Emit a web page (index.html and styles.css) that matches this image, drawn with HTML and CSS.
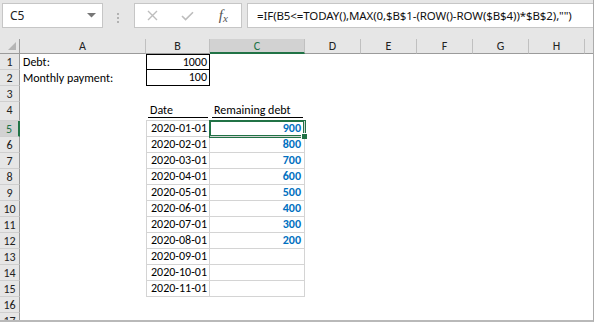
FILE: index.html
```html
<!DOCTYPE html>
<html lang="en">
	<head>
		<meta charset="utf-8" />
		<title>Remaining debt</title>
		<link rel="stylesheet" href="styles.css">
	</head>

	<body>
		<div class="window">
			<div class="toolbar">
				<div class="namebox">
					<span class="ref">C5</span>
					<svg class="caret" width="9" height="5" viewBox="0 0 9 5"><polygon points="0,0 9,0 4.5,4.5" fill="#777" /></svg>
				</div>
				<div class="grip"><i></i><i></i><i></i></div>
				<div class="fnbox">
					<span class="slot">
						<svg width="11" height="11" viewBox="0 0 11 11"><path d="M1 1 L10 10 M10 1 L1 10" stroke="#bdbdbd" stroke-width="1.4" fill="none" /></svg>
					</span>
					<span class="slot">
						<svg width="13" height="10" viewBox="0 0 13 10"><path d="M1 5 L4.6 8.6 L12 1.2" stroke="#bdbdbd" stroke-width="1.6" fill="none" /></svg>
					</span>
					<span class="slot fx">f<small>x</small></span>
				</div>
				<div class="formula">=IF(B5&lt;=TODAY(),MAX(0,$B$1-(ROW()-ROW($B$4))*$B$2),"")</div>
			</div>

			<div class="sheet">
				<div class="row head">
					<div class="rh corner">
						<svg width="8" height="8" viewBox="0 0 8 8"><polygon points="8,0 8,8 0,8" fill="#b5b5b5" /></svg>
					</div>
					<div class="ch col-a">A</div>
					<div class="ch col-b">B</div>
					<div class="ch col-c active">C</div>
					<div class="ch col-n">D</div>
					<div class="ch col-n">E</div>
					<div class="ch col-n">F</div>
					<div class="ch col-n">G</div>
					<div class="ch col-n">H</div>
					<div class="ch col-rest"></div>
				</div>

				<div class="row">
					<div class="rh">1</div>
					<div class="cell col-a">Debt:</div>
					<div class="cell col-b num boxed first">1000</div>
				</div>
				<div class="row">
					<div class="rh">2</div>
					<div class="cell col-a">Monthly payment:</div>
					<div class="cell col-b num boxed">100</div>
				</div>
				<div class="row">
					<div class="rh">3</div>
				</div>
				<div class="row tall">
					<div class="rh">4</div>
					<div class="cell col-a"></div>
					<div class="cell col-b heading"><span>Date</span></div>
					<div class="cell col-c heading"><span>Remaining debt</span></div>
				</div>

				<div class="row">
					<div class="rh active">5</div>
					<div class="cell col-a"></div>
					<div class="cell col-b date">2020-01-01</div>
					<div class="cell col-c amount selected">900</div>
				</div>
				<div class="row">
					<div class="rh">6</div>
					<div class="cell col-a"></div>
					<div class="cell col-b date">2020-02-01</div>
					<div class="cell col-c amount">800</div>
				</div>
				<div class="row">
					<div class="rh">7</div>
					<div class="cell col-a"></div>
					<div class="cell col-b date">2020-03-01</div>
					<div class="cell col-c amount">700</div>
				</div>
				<div class="row">
					<div class="rh">8</div>
					<div class="cell col-a"></div>
					<div class="cell col-b date">2020-04-01</div>
					<div class="cell col-c amount">600</div>
				</div>
				<div class="row">
					<div class="rh">9</div>
					<div class="cell col-a"></div>
					<div class="cell col-b date">2020-05-01</div>
					<div class="cell col-c amount">500</div>
				</div>
				<div class="row">
					<div class="rh">10</div>
					<div class="cell col-a"></div>
					<div class="cell col-b date">2020-06-01</div>
					<div class="cell col-c amount">400</div>
				</div>
				<div class="row">
					<div class="rh">11</div>
					<div class="cell col-a"></div>
					<div class="cell col-b date">2020-07-01</div>
					<div class="cell col-c amount">300</div>
				</div>
				<div class="row">
					<div class="rh">12</div>
					<div class="cell col-a"></div>
					<div class="cell col-b date">2020-08-01</div>
					<div class="cell col-c amount">200</div>
				</div>
				<div class="row">
					<div class="rh">13</div>
					<div class="cell col-a"></div>
					<div class="cell col-b date">2020-09-01</div>
					<div class="cell col-c amount"></div>
				</div>
				<div class="row">
					<div class="rh">14</div>
					<div class="cell col-a"></div>
					<div class="cell col-b date">2020-10-01</div>
					<div class="cell col-c amount"></div>
				</div>
				<div class="row">
					<div class="rh">15</div>
					<div class="cell col-a"></div>
					<div class="cell col-b date">2020-11-01</div>
					<div class="cell col-c amount"></div>
				</div>
				<div class="row">
					<div class="rh">16</div>
				</div>
				<div class="row">
					<div class="rh">17</div>
				</div>
			</div>
		</div>
	</body>
</html>
```

FILE: styles.css
```css
body {
	margin: 0;
	font-family: Calibri, Carlito, 'Liberation Sans', Arial, sans-serif;
	color: #000;
}

.window {
	box-sizing: border-box;
	width: 594px;
	height: 322px;
	overflow: hidden;
	background: #fff;
	border-right: 1px solid #ababab;
	border-bottom: 2px solid #b9b9b9;
}

/* formula bar */

.toolbar {
	display: flex;
	align-items: flex-start;
	height: 39px;
	padding: 3px 0 0 2px;
	box-sizing: border-box;
	background: #e6e6e6;
}

.namebox,
.fnbox,
.formula {
	box-sizing: border-box;
	height: 25px;
	background: #fff;
	border: 1px solid #c6c6c6;
}

.namebox {
	display: flex;
	align-items: center;
	justify-content: space-between;
	width: 101px;
	padding: 0 6px 0 7px;
	font-family: 'Noto Sans', 'Liberation Sans', sans-serif;
	font-size: 12px;
	color: #222;
}

.grip {
	display: flex;
	flex-direction: column;
	gap: 2px;
	width: 2px;
	margin: 10px 15px 0 14px;
}

.grip i {
	display: block;
	width: 2px;
	height: 2px;
	background: #b2b2b2;
}

.fnbox {
	display: flex;
	width: 108px;
	margin-right: 5px;
}

.slot {
	display: flex;
	align-items: center;
	justify-content: center;
	width: 36px;
	height: 23px;
}

.fx {
	font-family: 'Liberation Serif', 'Times New Roman', serif;
	font-style: italic;
	font-size: 15px;
	color: #555;
	padding-bottom: 2px;
}

.fx small {
	font-size: 11px;
	margin-top: 4px;
}

.formula {
	flex: 1;
	padding: 0 0 0 9px;
	line-height: 23px;
	font-family: 'Noto Sans', 'Liberation Sans', sans-serif;
	font-size: 11.5px;
	letter-spacing: -0.1px;
	color: #111;
	white-space: nowrap;
	border-right: none;
}

/* grid */

.sheet {
	font-size: 12px;
}

.row {
	display: flex;
	height: 16px;
}

.row.tall {
	height: 19px;
}

.row.head {
	height: 15px;
	background: #e6e6e6;
}

.rh {
	box-sizing: border-box;
	flex: none;
	width: 20px;
	height: 100%;
	background: #e6e6e6;
	border-right: 1px solid #9b9b9b;
	border-bottom: 1px solid #cfcfcf;
	text-align: center;
	line-height: 16px;
	color: #222;
}

.rh.active {
	background: #d2d2d2;
	border-right: 2px solid #217346;
	color: #217346;
}

.rh.corner {
	display: flex;
	align-items: flex-end;
	justify-content: flex-end;
	padding: 0 3px 3px 0;
	border-bottom: 1px solid #9b9b9b;
}

.ch {
	box-sizing: border-box;
	flex: none;
	height: 100%;
	border-right: 1px solid #c0c0c0;
	border-bottom: 1px solid #9b9b9b;
	text-align: center;
	line-height: 15px;
	color: #222;
}

.ch.active {
	background: #d2d2d2;
	border-bottom: 2px solid #217346;
	color: #217346;
}

.ch.col-rest {
	flex: 1;
	border-right: none;
}

.col-a { width: 126px; }
.col-b { width: 64px; }
.col-c { width: 95px; }
.col-n { width: 56px; }

.cell {
	box-sizing: border-box;
	flex: none;
	height: 100%;
	padding: 0 3px;
	line-height: 16px;
	white-space: nowrap;
}

.cell.num {
	text-align: right;
	padding-right: 2px;
}

.cell.boxed {
	border: 1px solid #000;
	border-top: none;
	line-height: 15px;
}

.cell.boxed.first {
	border-top: 1px solid #000;
	line-height: 14px;
}

.cell.heading {
	display: flex;
	align-items: flex-end;
	padding: 0 2px 2px;
	border-bottom: 1px solid #d4d4d4;
}

.cell.heading span {
	flex: 1;
	padding-left: 2px;
	line-height: 14px;
	border-bottom: 1px solid #000;
}

.cell.date,
.cell.amount {
	border-right: 1px solid #d4d4d4;
	border-bottom: 1px solid #d4d4d4;
	line-height: 15px;
}

.cell.date {
	border-left: 1px solid #d4d4d4;
	padding-left: 4px;
}

.cell.amount {
	text-align: right;
	padding-right: 3px;
	font-weight: bold;
	color: #0070c0;
}

.cell.selected {
	position: relative;
	box-shadow: 0 0 0 1px #217346, inset 0 0 0 1px #217346;
}

.cell.selected::after {
	content: '';
	position: absolute;
	right: -3px;
	bottom: -3px;
	width: 5px;
	height: 5px;
	background: #217346;
	border-left: 1px solid #fff;
	border-top: 1px solid #fff;
}
```
